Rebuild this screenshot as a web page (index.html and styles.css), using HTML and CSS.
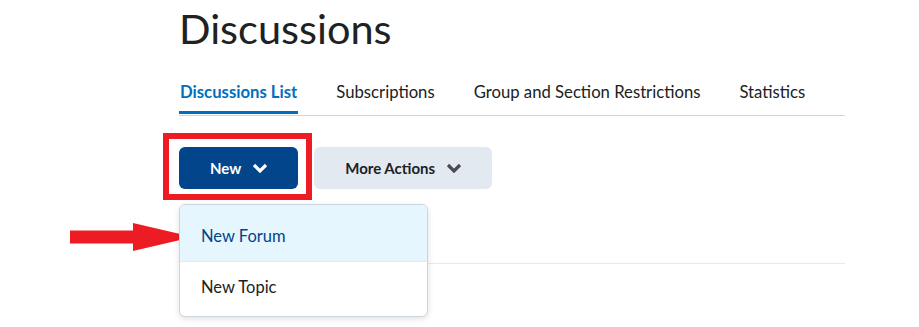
FILE: index.html
```html
<!DOCTYPE html>
<html>
  <head>
    <meta charset="utf-8" />
    <meta name="viewport" content="width=device-width, initial-scale=1.0" />
    <title>Discussions</title>
    <link rel="stylesheet" href="styles.css">
  </head>
  <body>
    <main class="page">
      <h1>Discussions</h1>
      <nav class="tabs">
        <a class="tab active">Discussions List</a>
        <a class="tab">Subscriptions</a>
        <a class="tab">Group and Section Restrictions</a>
        <a class="tab">Statistics</a>
      </nav>
      <section class="toolbar">
        <div class="new-wrap">
          <button class="btn primary">New
            <svg class="chev" viewBox="0 0 16 10"><path d="M2 2l6 6 6-6" /></svg>
          </button>
          <div class="callout"></div>
          <ul class="menu">
            <li class="menu-item hover">New Forum</li>
            <li class="menu-item">New Topic</li>
          </ul>
          <svg class="arrow" viewBox="0 0 123 28"><path d="M0 7.5h63V0l60 14-60 14v-7.5H0z" /></svg>
        </div>
        <button class="btn">More Actions
          <svg class="chev" viewBox="0 0 16 10"><path d="M2 2l6 6 6-6" /></svg>
        </button>
      </section>
      <div class="list"></div>
    </main>
  </body>
</html>
```

FILE: styles.css
```css
html, body {
    margin: 0;
    background: #fff;
    font-family: Lato, 'Open Sans', sans-serif;
    color: #202122;
}
.page {
    margin-left: 179px;
    width: 666px;
    min-height: 327px;
}
h1 {
    margin: 0;
    padding-top: 3px;
    font-size: 41.5px;
    font-weight: 400;
    line-height: 50px;
}
.tabs {
    display: flex;
    gap: 37px;
    margin-top: 29px;
    border-bottom: 1px solid #cdd5dc;
}
.tab {
    font-size: 16.7px;
    line-height: 20px;
    padding: 0 1px 9px;
    margin-bottom: 1px;
    border-bottom: 3px solid transparent;
}
.tab.active {
    color: #006fbf;
    font-weight: 700;
    border-bottom-color: #006fbf;
}
.toolbar {
    display: flex;
    gap: 16px;
    margin-top: 31px;
}
.new-wrap {
    position: relative;
}
.btn {
    display: flex;
    align-items: center;
    gap: 11px;
    height: 42px;
    padding: 0 30px 0 31px;
    border: none;
    border-radius: 6px;
    background: #e3e9f1;
    color: #202122;
    font-family: inherit;
    font-size: 15px;
    font-weight: 700;
}
.btn .chev {
    width: 16px;
    height: 10px;
    fill: none;
    stroke: #494c4e;
    stroke-width: 3.2;
}
.btn.primary {
    background: #02458a;
    color: #fff;
}
.btn.primary .chev {
    stroke: #fff;
}
.callout {
    position: absolute;
    top: -14px;
    right: -14px;
    bottom: -11px;
    left: -16px;
    border: 6px solid #ed1c24;
}
.menu {
    position: absolute;
    top: 57px;
    left: 0;
    width: 247px;
    margin: 0;
    padding: 0;
    list-style: none;
    background: #fff;
    border: 1px solid #cdd5dc;
    border-radius: 6px;
    box-shadow: 0 2px 6px rgba(0, 0, 0, 0.12);
    overflow: hidden;
    z-index: 2;
}
.menu-item {
    font-size: 16.5px;
    line-height: 20px;
    padding: 15px 21px 19px;
}
.menu-item.hover {
    padding: 21px 21px 15px;
    background: #e6f6fe;
    color: #004489;
    border-bottom: 1px solid #e3e9f1;
}
.arrow {
    position: absolute;
    top: 76px;
    left: -109px;
    width: 123px;
    height: 28px;
    fill: #ed1c24;
}
.list {
    margin-top: 74px;
    border-top: 1px solid #e6eaee;
}
```
